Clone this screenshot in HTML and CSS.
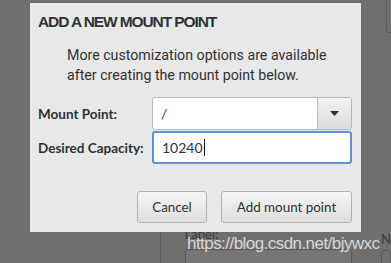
FILE: index.html
```html
<!DOCTYPE html>
<html>
<head>
<meta charset="utf-8">
<link rel="stylesheet" href="styles.css">
</head>
<body>
<div class="screen">
  <div class="topbar">
    <div class="topbar-blue"></div>
    <div class="topbar-mid"></div>
    <div class="topbar-rest"></div>
  </div>
  <div class="behind">
    <div class="behind-left"></div>
    <div class="behind-main">
      <div class="behind-label">Label:</div>
      <div class="behind-input"></div>
    </div>
    <div class="behind-right">
      <div class="behind-n">N</div>
      <div class="behind-box"></div>
    </div>
  </div>
  <div class="corner-box"></div>

  <div class="dialog">
    <h1 class="title">ADD A NEW MOUNT POINT</h1>
    <p class="intro">More customization options are available<br>after creating the mount point below.</p>
    <div class="form">
      <label class="field-label">Mount Point:</label>
      <div class="combo">
        <span class="combo-text">/</span>
        <span class="combo-btn">
          <svg width="9" height="5" viewBox="0 0 9 5"><path d="M0 0 H9 L4.5 5 Z" fill="#2e3436"/></svg>
        </span>
      </div>
      <label class="field-label">Desired Capacity:</label>
      <div class="entry"><span class="entry-text">10240</span><span class="caret"></span></div>
    </div>
    <div class="buttons">
      <button class="btn btn-cancel">Cancel</button>
      <button class="btn btn-add">Add mount point</button>
    </div>
  </div>

  <div class="watermark">https://blog.csdn.net/bjywxc</div>
</div>
</body>
</html>
```
FILE: styles.css
```css
* { box-sizing: border-box; }
html, body { margin: 0; padding: 0; }
body {
  width: 391px;
  height: 263px;
  overflow: hidden;
  background: #6f6f6f;
  font-family: Lato, "Noto Sans", sans-serif;
}
.screen {
  position: relative;
  width: 391px;
  height: 263px;
  background: #6f6f6f;
  display: flex;
  flex-direction: column;
}
.topbar {
  display: flex;
  height: 3px;
}
.topbar-blue { width: 162px; background: #2c4868; }
.topbar-mid { width: 200px; background: #787878; }
.topbar-rest { flex: 1; background: #6f6f6f; }

.behind {
  flex: 1;
  display: flex;
  padding-top: 226px;
}
.behind-left {
  width: 163px;
  border-right: 1px solid #5e5e5e;
}
.behind-main {
  width: 200px;
  padding-left: 24px;
  display: flex;
  flex-direction: column;
}
.behind-label {
  font-size: 13px;
  color: #3a3a3a;
  line-height: 14px;
  margin-top: 1px;
}
.behind-input {
  margin-top: 8px;
  width: 167px;
  height: 20px;
  border: 1px solid #5a5a5a;
  border-radius: 3px;
  background: #767676;
}
.behind-right {
  flex: 1;
  padding-left: 23px;
  display: flex;
  flex-direction: column;
}
.behind-n {
  font-size: 13px;
  color: #3a3a3a;
  line-height: 14px;
  margin-top: 6px;
}
.behind-box {
  margin-top: 4px;
  height: 20px;
  border: 1px solid #5a5a5a;
  border-radius: 3px;
}
.corner-box {
  position: absolute;
  left: 386px;
  top: -4px;
  width: 20px;
  height: 37px;
  border: 1px solid #5a5a5a;
  border-radius: 3px;
}

.dialog {
  position: absolute;
  left: 30px;
  top: 3px;
  width: 331px;
  height: 229px;
  background: #e8e8e8;
  color: #2e3436;
  padding: 9px 9px 9px 8px;
  display: flex;
  flex-direction: column;
}
.title {
  margin: 0;
  font-family: "Liberation Sans", Arial, sans-serif;
  font-size: 15.5px;
  font-weight: 700;
  line-height: 20px;
  letter-spacing: -1.1px;
  color: #2e3436;
  white-space: nowrap;
}
.intro {
  margin: 13px 0 0 29px;
  font-family: Roboto, "Noto Sans", sans-serif;
  font-size: 14.2px;
  line-height: 20px;
  color: #2e3436;
  white-space: nowrap;
}
.form {
  margin-top: 12px;
  display: grid;
  grid-template-columns: 114px 200px;
  grid-template-rows: 33px 33px;
  row-gap: 1px;
  align-items: center;
}
.field-label {
  font-size: 13.5px;
  font-weight: 700;
  color: #2e3436;
}
.combo {
  height: 33px;
  display: flex;
  background: #fff;
  border: 1px solid #b8b8b5;
  border-radius: 3px;
}
.combo-text {
  flex: 1;
  padding-left: 8px;
  font-size: 14px;
  line-height: 31px;
}
.combo-btn {
  width: 34px;
  border-left: 1px solid #b8b8b5;
  background: linear-gradient(#f2f2f2, #dcdcdc);
  border-radius: 0 2px 2px 0;
  display: flex;
  align-items: center;
  justify-content: center;
}
.entry {
  height: 33px;
  background: #fff;
  border: 2px solid #5b94d3;
  border-radius: 3px;
  display: flex;
  align-items: center;
  padding-left: 8px;
}
.entry-text {
  font-size: 14px;
}
.caret {
  width: 1px;
  height: 17px;
  background: #111;
  margin-left: 1px;
}
.buttons {
  margin-top: auto;
  display: flex;
  justify-content: flex-end;
  gap: 14px;
}
.btn {
  height: 32px;
  font-family: inherit;
  font-size: 13.4px;
  color: #2e3436;
  border: 1px solid #b3b3b0;
  border-radius: 3px;
  background: linear-gradient(#f5f5f5, #dedede);
  padding: 0;
}
.btn-cancel { width: 70px; }
.btn-add { width: 131px; }

.watermark {
  position: absolute;
  left: 187px;
  top: 234px;
  font-family: "Liberation Sans", Arial, sans-serif;
  font-size: 17px;
  line-height: 20px;
  color: #d6d6d6;
  letter-spacing: -0.55px;
  white-space: nowrap;
}
```
